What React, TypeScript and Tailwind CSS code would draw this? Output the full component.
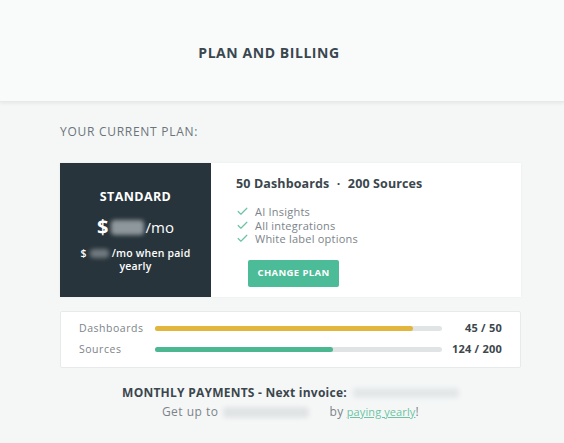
import { Check } from "lucide-react";

const usage = [
  { label: "Dashboards", used: 45, total: 50, color: "bg-[#e2b53c]" },
  { label: "Sources", used: 124, total: 200, color: "bg-[#4cb892]" },
];

const features = ["AI Insights", "All integrations", "White label options"];

// blurred placeholder for hidden prices / dates
function Blur({ className }: { className: string }) {
  return <span className={`inline-block rounded-sm blur-[2px] ${className}`} />;
}

export default function App() {
  return (
    <div className="min-h-[443px] w-[564px] bg-[#f5f7f7] font-['Open_Sans',sans-serif] text-[#3b464d]">
      <header className="flex h-[102px] items-center justify-center border-b border-[#e6e9e9] bg-[#f9fafa] pr-[26px] pt-[4px] shadow-[0_2px_3px_rgba(0,0,0,0.05)]">
        <h1 className="text-[14px] font-bold tracking-[0.04em] text-[#3a474f]">PLAN AND BILLING</h1>
      </header>

      <main className="px-[60px] pt-[22px]">
        <div className="text-[12px] leading-[16px] tracking-[0.06em] text-[#6b7479]">YOUR CURRENT PLAN:</div>

        <div className="mt-[23px] flex h-[134px] w-[461px] bg-white shadow-[0_0_2px_rgba(0,0,0,0.06)]">
          <div className="flex w-[151px] flex-col items-center bg-[#28343b] pt-[26px] text-white">
            <div className="text-[12.5px] font-bold leading-[16px] tracking-[0.03em]">STANDARD</div>
            <div className="mt-[10px] flex h-[24px] items-center">
              <span className="text-[20px] font-bold">$</span>
              <Blur className="ml-[2px] h-[15px] w-[33px] bg-[#8e979c]" />
              <span className="ml-[2px] text-[15px]">/mo</span>
            </div>
            <div className="mt-[8px] flex w-[120px] flex-wrap items-center justify-center text-[10.5px] font-semibold leading-[13px] tracking-[0.02em]">
              <span>$</span>
              <Blur className="mx-[3px] h-[9px] w-[19px] bg-[#6e787e]" />
              <span>/mo when paid</span>
              <span className="w-full text-center">yearly</span>
            </div>
          </div>

          <div className="flex flex-col pl-[25px] pt-[13px]">
            <div className="text-[12.5px] font-bold leading-[16px] tracking-[0.01em] text-[#3b464d]">
              50 Dashboards <span className="mx-[4px]">·</span> 200 Sources
            </div>
            <ul className="mt-[13px] flex flex-col text-[11px] leading-[13.5px] tracking-[0.02em] text-[#7c8489]">
              {features.map((f) => (
                <li key={f} className="flex items-center gap-[6px]">
                  <Check size={13} strokeWidth={2.2} className="text-[#6cc4a4]" />
                  {f}
                </li>
              ))}
            </ul>
            <button className="ml-[12px] mt-[14px] h-[27px] w-[91px] rounded-[2px] bg-[#4cbb98] text-[9.5px] font-bold tracking-[0.04em] text-white">
              CHANGE PLAN
            </button>
          </div>
        </div>

        <div className="mt-[14px] flex w-[461px] flex-col gap-[8px] rounded-[2px] border border-[#e7eaea] bg-white px-[18px] pb-[11px] pt-[10px]">
          {usage.map((u) => (
            <div key={u.label} className="flex h-[13px] items-center">
              <span className="w-[76px] text-[10.5px] tracking-[0.05em] text-[#7c8489]">{u.label}</span>
              <div className="h-[5px] w-[287px] rounded-full bg-[#e1e4e5]">
                <div className={`h-full rounded-full ${u.color}`} style={{ width: `${(u.used / u.total) * 100}%` }} />
              </div>
              <span className="ml-auto text-[11px] font-bold tracking-[0.02em] text-[#3b464d]">
                {u.used} / {u.total}
              </span>
            </div>
          ))}
        </div>

        <div className="mt-[17px] flex w-[461px] flex-col items-center">
          <div className="flex items-center text-[12px] font-bold leading-[16px] tracking-[0.02em] text-[#3b464d]">
            <span>MONTHLY PAYMENTS - Next invoice:</span>
            <Blur className="ml-[6px] h-[10px] w-[106px] bg-[#e4e7e8]" />
          </div>
          <div className="mt-[3px] flex items-center text-[12px] leading-[16px] tracking-[0.04em] text-[#7c8489]">
            <span>Get up to</span>
            <Blur className="ml-[5px] h-[11px] w-[86px] bg-[#e1e4e5]" />
            <span className="ml-[20px]">by</span>
            <a className="ml-[3px] text-[11px] tracking-[0.01em] text-[#6cc4a4] underline">paying yearly</a>
            <span>!</span>
          </div>
        </div>
      </main>
    </div>
  );
}
